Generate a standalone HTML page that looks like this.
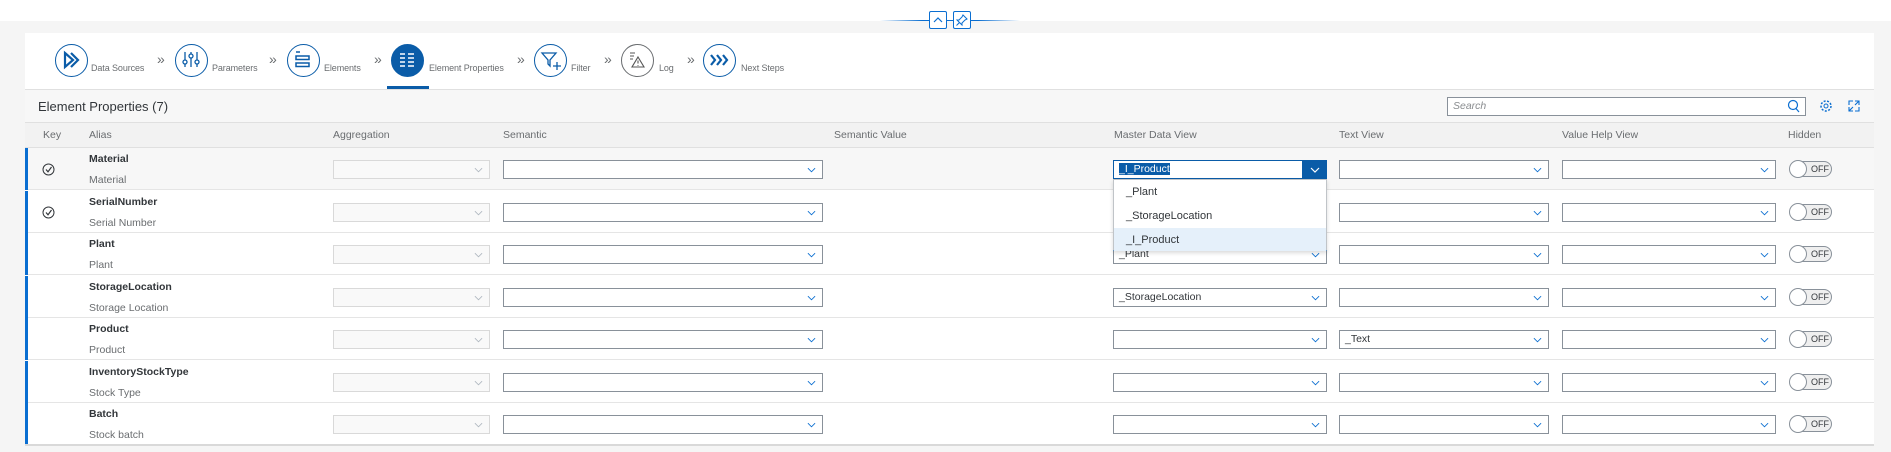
<!DOCTYPE html>
<html><head><meta charset="utf-8"><style>
*{box-sizing:border-box;margin:0;padding:0}
body{width:1891px;height:452px;background:#f5f5f5;font-family:"Liberation Sans",sans-serif;color:#32363a;position:relative;overflow:hidden}
.a{position:absolute}
.top{left:0;top:0;width:1891px;height:21px;background:#fff}
.line{left:880px;top:20px;width:140px;height:1px;background:linear-gradient(90deg,rgba(10,110,209,0),#0a6ed1 30%,#0a6ed1 70%,rgba(10,110,209,0))}
.tb{width:18px;height:18px;border:1px solid #0a6ed1;border-radius:2px;background:#fff;top:11px}
.panel{left:25px;top:33px;width:1849px;height:413px;background:#fff}
.step{width:33px;height:33px;border:1.5px solid #0a5ca8;border-radius:50%;top:44px;background:#fff}
.lbl{font-size:9px;color:#6a6d70;top:63px;letter-spacing:-0.1px}
.chev{font-size:14px;color:#6a6d70;top:51px}
.hdr{font-size:10.5px;color:#6a6d70;top:129px}
.box{height:19px;border:1px solid #89919a;background:#fff;font-size:10.5px;padding-left:5px;line-height:17px}
.dis{border-color:#d9d9d9;background:#f9f9f9}
.row{left:25px;width:1849px;height:42px;border-bottom:1px solid #e5e5e5}
.bar{left:25px;width:3px;background:#0a6ed1}
.n1{font-size:10.5px;font-weight:bold;left:89px}
.n2{font-size:10.5px;color:#6a6d70;left:89px}
.tg{width:44px;height:18px}
</style></head><body>
<div class="a top"></div>
<div class="a line"></div>
<div class="a tb" style="left:929px"><svg width="16" height="16"><path d="M4 10 L8 6 L12 10" stroke="#0a6ed1" fill="none" stroke-width="1.2"/></svg></div>
<div class="a tb" style="left:953px"><svg width="16" height="16"><path d="M9 3 L13 7 L11 8 L8 11 L8 13 L3 8 L5 8 L8 5 Z M5.5 10.5 L2.5 13.5" stroke="#0a6ed1" fill="none" stroke-width="1"/></svg></div>

<div class="a panel"></div>
<div class="a step" style="left:55px"><svg width="30" height="30"><path d="M9 8 L17 15 L9 22 Z M15 8 L22 15 L15 22" stroke="#0a5ca8" fill="none" stroke-width="2.2"/></svg></div>
<div class="a lbl" style="left:91px">Data Sources</div>
<div class="a chev" style="left:157px">»</div>
<div class="a step" style="left:175px"><svg width="30" height="30"><g stroke="#0a5ca8" fill="none" stroke-width="1.3"><path d="M9 7V22M15 7V22M21 7V22"/><circle cx="9" cy="17" r="2" fill="#fff"/><circle cx="15" cy="11" r="2" fill="#fff"/><circle cx="21" cy="17" r="2" fill="#fff"/></g></svg></div>
<div class="a lbl" style="left:212px">Parameters</div>
<div class="a chev" style="left:269px">»</div>
<div class="a step" style="left:287px"><svg width="30" height="30"><g stroke="#0a5ca8" fill="none" stroke-width="1.5"><path d="M8 7H12"/><rect x="8" y="11" width="13" height="3.5"/><rect x="8" y="18" width="13" height="3.5"/></g></svg></div>
<div class="a lbl" style="left:324px">Elements</div>
<div class="a chev" style="left:374px">»</div>
<div class="a step" style="left:391px;background:#0a5ca8;border-color:#0a5ca8"><svg width="30" height="30"><g stroke="#fff" stroke-width="1.4"><path d="M8 9H13M16 9H22M8 13H13M16 13H22M8 17H13M16 17H22M8 21H13M16 21H22"/></g></svg></div>
<div class="a lbl" style="left:429px">Element Properties</div>
<div class="a" style="left:387px;top:86px;width:42px;height:3px;background:#0a5ca8"></div>
<div class="a chev" style="left:517px">»</div>
<div class="a step" style="left:534px"><svg width="30" height="30"><g stroke="#0a5ca8" fill="none" stroke-width="1.3"><path d="M7 8H21L15 15V21L13 19V15Z M18 21H26M22 17V25"/></g></svg></div>
<div class="a lbl" style="left:571px">Filter</div>
<div class="a chev" style="left:604px">»</div>
<div class="a step" style="left:621px;border-color:#6a6d70"><svg width="30" height="30"><g stroke="#555" fill="none" stroke-width="1.1"><path d="M8 8H13M8 11H12M8 14H11M16 12L22 22H10Z M16 15.5V18.5M16 20V20.8"/></g></svg></div>
<div class="a lbl" style="left:659px">Log</div>
<div class="a chev" style="left:687px">»</div>
<div class="a step" style="left:703px"><svg width="30" height="30"><g stroke="#0a5ca8" fill="none" stroke-width="2.2"><path d="M7 10L11 15L7 20M13 10L17 15L13 20M19 10L23 15L19 20"/></g></svg></div>
<div class="a lbl" style="left:741px">Next Steps</div>

<div class="a" style="left:25px;top:89px;width:1849px;height:33px;background:#f7f7f7;border-top:1px solid #e0e0e0"></div>
<div class="a" style="left:38px;top:99px;font-size:13px;color:#32363a">Element Properties (7)</div>
<div class="a box" style="left:1447px;top:97px;width:359px;height:19px;font-style:italic;color:#8a8d90;font-size:10.5px">Search</div>
<svg class="a" style="left:1786px;top:98px" width="16" height="16"><circle cx="7" cy="7" r="4.5" stroke="#0a6ed1" fill="none" stroke-width="1.2"/><path d="M10 10.5L13 14" stroke="#0a6ed1" stroke-width="1.2"/></svg>
<svg class="a" style="left:1818px;top:98px" width="16" height="16"><circle cx="8" cy="8" r="5" stroke="#0a6ed1" fill="none" stroke-width="1.5" stroke-dasharray="2 1.5"/><circle cx="8" cy="8" r="2" stroke="#0a6ed1" fill="none"/></svg>
<svg class="a" style="left:1846px;top:98px" width="16" height="16"><path d="M3 7V3H7M9 3H13V7M13 9V13H9M7 13H3V9M3 13L7 9M13 3L9 7" stroke="#0a6ed1" fill="none" stroke-width="1.1"/></svg>

<div class="a" style="left:25px;top:122px;width:1849px;height:26px;background:#f2f2f2;border-top:1px solid #e0e0e0;border-bottom:1px solid #e0e0e0"></div>
<div class="a hdr" style="left:43px">Key</div>
<div class="a hdr" style="left:89px">Alias</div>
<div class="a hdr" style="left:333px">Aggregation</div>
<div class="a hdr" style="left:503px">Semantic</div>
<div class="a hdr" style="left:834px">Semantic Value</div>
<div class="a hdr" style="left:1114px">Master Data View</div>
<div class="a hdr" style="left:1339px">Text View</div>
<div class="a hdr" style="left:1562px">Value Help View</div>
<div class="a hdr" style="left:1788px">Hidden</div>

<svg width="0" height="0" style="position:absolute"><defs><symbol id="cv" viewBox="0 0 10 6"><path d="M1 1L5 5L9 1" stroke="#0a6ed1" fill="none" stroke-width="1"/></symbol><symbol id="cvg" viewBox="0 0 10 6"><path d="M1 1L5 5L9 1" stroke="#b0b8c0" fill="none" stroke-width="1"/></symbol></defs></svg>

<div id="rows"></div>
<script>
var R=[["Material","Material",1,"",""],["SerialNumber","Serial Number",1,"",""],["Plant","Plant",0,"_Plant",""],["StorageLocation","Storage Location",0,"_StorageLocation",""],["Product","Product",0,"","_Text"],["InventoryStockType","Stock Type",0,"",""],["Batch","Stock batch",0,"",""]];
var h="";
R.forEach(function(r,i){var y=148+Math.round(i*42.5);var bt=y+12;
h+='<div class="a row" style="top:'+y+'px;'+(i==0?'background:#f7f7f7':'')+'"></div>';
h+='<div class="a bar" style="top:'+y+'px;height:42px"></div>';
if(r[2])h+='<svg class="a" style="left:42px;top:'+(y+15)+'px" width="13" height="13"><circle cx="6.5" cy="6.5" r="5.5" stroke="#32363a" fill="none"/><path d="M4 6.5L6 8.8L9.5 4" stroke="#32363a" fill="none" stroke-width="1.2"/></svg>';
h+='<div class="a n1" style="top:'+(y+5)+'px">'+r[0]+'</div><div class="a n2" style="top:'+(y+26)+'px">'+r[1]+'</div>';
function box(x,w,t,dis){return '<div class="a box'+(dis?' dis':'')+'" style="left:'+x+'px;top:'+bt+'px;width:'+w+'px">'+t+'</div><svg class="a" style="left:'+(x+w-16)+'px;top:'+(bt+7)+'px" width="9" height="6"><use href="#'+(dis?'cvg':'cv')+'"/></svg>';}
h+=box(333,157,"",1)+box(503,320,"",0);
if(i==0){h+='<div class="a box" style="left:1113px;top:'+bt+'px;width:214px;border-color:#0a5ca8"><span style="background:#0a5ca8;color:#fff">_I_Product</span></div><div class="a" style="left:1302px;top:'+bt+'px;width:25px;height:19px;background:#0a5ca8"></div><svg class="a" style="left:1310px;top:'+(bt+7)+'px" width="10" height="6"><path d="M1 1L5 5L9 1" stroke="#fff" fill="none" stroke-width="1.2"/></svg>';}
else h+=box(1113,214,r[3],0);
h+=box(1339,210,r[4],0)+box(1562,214,"",0);
h+='<div class="a tg" style="left:1789px;top:'+(bt)+'px"><div class="a" style="left:6px;top:1px;width:37px;height:16px;border:1px solid #89919a;border-radius:8px;background:#efefef;font-size:9px;line-height:14px;padding-left:15px;color:#32363a">OFF</div><div class="a" style="left:0;top:0;width:18px;height:18px;border:1px solid #89919a;border-radius:50%;background:#fff"></div></div>';
});
h+='<div class="a" style="left:25px;top:444px;width:1849px;height:2px;background:#d9d9d9"></div>';
h+='<div class="a" style="left:1113px;top:179px;width:214px;height:72px;background:#fff;border:1px solid #c0c4c8;border-bottom:1px solid #0a5ca8;box-shadow:0 2px 4px rgba(0,0,0,.15);font-size:11px">'+
'<div class="a" style="left:0;top:48px;width:212px;height:23px;background:#e5f0fa"></div>'+
'<div class="a" style="left:12px;top:6px">_Plant</div><div class="a" style="left:12px;top:30px">_StorageLocation</div><div class="a" style="left:12px;top:54px">_I_Product</div></div>';
document.getElementById("rows").innerHTML=h;
</script>
</body></html>
